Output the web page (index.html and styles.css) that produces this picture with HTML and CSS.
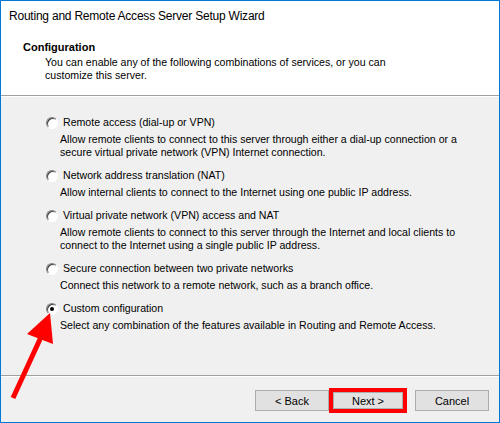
FILE: index.html
```html
<!DOCTYPE html>
<html lang="en">
  <head>
    <meta charset="UTF-8" />
    <meta name="viewport" content="width=device-width, initial-scale=1.0" />
    <title>Routing and Remote Access Server Setup Wizard</title>
    <link rel="stylesheet" href="styles.css">
  </head>
  <body>
    <div id="wizard">
      <div class="caption">Routing and Remote Access Server Setup Wizard</div>

      <div class="header">
        <h1>Configuration</h1>
        <p>You can enable any of the following combinations of services, or you can<br>customize this server.</p>
      </div>

      <div class="options">
        <div class="option">
          <label><span class="radio"></span>Remote access (dial-up or VPN)</label>
          <p>Allow remote clients to connect to this server through either a dial-up connection or a<br>secure virtual private network (VPN) Internet connection.</p>
        </div>
        <div class="option">
          <label><span class="radio"></span>Network address translation (NAT)</label>
          <p>Allow internal clients to connect to the Internet using one public IP address.</p>
        </div>
        <div class="option">
          <label><span class="radio"></span>Virtual private network (VPN) access and NAT</label>
          <p>Allow remote clients to connect to this server through the Internet and local clients to<br>connect to the Internet using a single public IP address.</p>
        </div>
        <div class="option">
          <label><span class="radio"></span>Secure connection between two private networks</label>
          <p>Connect this network to a remote network, such as a branch office.</p>
        </div>
        <div class="option">
          <label><span class="radio checked"></span>Custom configuration</label>
          <p>Select any combination of the features available in Routing and Remote Access.</p>
        </div>
      </div>

      <div class="buttons">
        <button>&lt; Back</button>
        <button class="next">Next &gt;</button>
        <button class="cancel">Cancel</button>
      </div>

      <!-- red pointer drawn on top, towards the selected option -->
      <svg class="pointer" width="70" height="110" viewBox="0 300 70 110">
        <line x1="41" y1="337" x2="13" y2="398" stroke="#ff0000" stroke-width="5" />
        <polygon points="50,313 27,334 53,344" fill="#ff0000" />
      </svg>
    </div>
  </body>
</html>
```

FILE: styles.css
```css
* {
  box-sizing: border-box;
}

body {
  margin: 0;
  font-family: "Liberation Sans", Arial, sans-serif;
  font-size: 10.6px;
  color: #000;
}

#wizard {
  position: relative;
  display: flex;
  flex-direction: column;
  width: 500px;
  height: 423px;
  border: 1px solid #0078d7;
  background-color: #f0f0f0;
}

.caption {
  background-color: #fff;
  padding: 7px 0 0 8px;
  font-size: 12px;
  letter-spacing: -0.22px;
  line-height: 16px;
}

.header {
  background-color: #fff;
  padding: 17px 0 13px 22px;
  border-bottom: 1px solid #a0a0a0;
}

h1 {
  margin: 0;
  font-size: 11px;
  line-height: 13px;
  font-weight: bold;
}

.header p {
  margin: 2px 0 0 22px;
  line-height: 13px;
}

.options {
  flex: 1;
  padding: 20px 0 0 45px;
  box-shadow: inset 0 1px #fff;
}

.option {
  margin-bottom: 10px;
}

.option label {
  display: flex;
  align-items: center;
  height: 13px;
  line-height: 13px;
}

.option p {
  margin: 4px 0 0 14px;
  line-height: 13px;
}

.radio {
  width: 12px;
  height: 12px;
  margin-right: 5px;
  border-radius: 50%;
  border: 1px solid;
  border-color: #808080 #fff #fff #808080;
  background-color: #fff;
  box-shadow: inset 1px 1px #404040;
  display: flex;
  align-items: center;
  justify-content: center;
}

.radio.checked::after {
  content: "";
  width: 4px;
  height: 4px;
  border-radius: 50%;
  background-color: #000;
}

.buttons {
  display: flex;
  justify-content: flex-end;
  padding: 14px 10px 11px 0;
  border-top: 1px solid #a0a0a0;
  box-shadow: inset 0 1px #fff;
}

.buttons button {
  width: 74px;
  height: 21px;
  padding: 0;
  font-family: inherit;
  font-size: 11px;
  color: #000;
  background-color: #e1e1e1;
  border: 1px solid #adadad;
}

.buttons .next {
  margin-left: 2px;
  outline: 4px solid #ff0000;
  outline-offset: -2px;
  box-shadow: inset 0 0 0 2px #adadad;
}

.buttons .cancel {
  margin-left: 10px;
}

.pointer {
  position: absolute;
  left: -1px;
  top: 299px;
}
```
